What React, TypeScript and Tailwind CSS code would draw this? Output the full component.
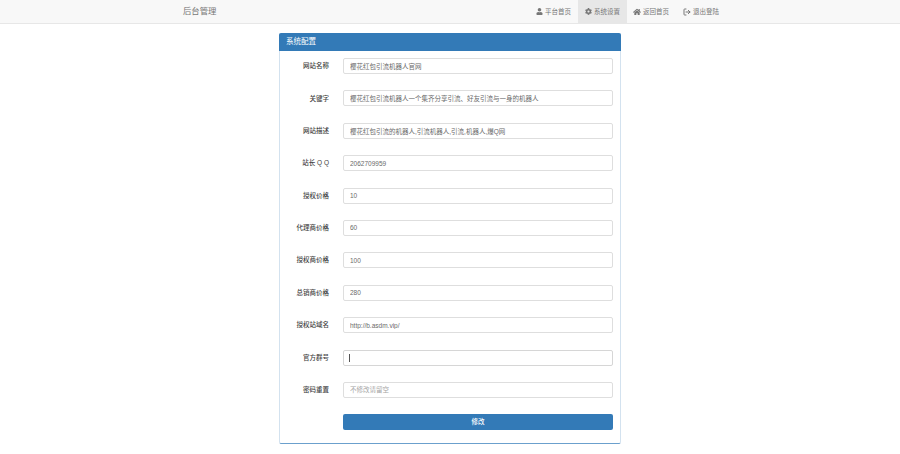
import React from 'react';
import { FaUser, FaCog, FaHome } from 'react-icons/fa';
import { FiLogOut } from 'react-icons/fi';

const fields = [
  { label: '网站名称', value: '樱花红包引流机器人官网' },
  { label: '关键字', value: '樱花红包引流机器人一个集齐分享引流、好友引流与一身的机器人' },
  { label: '网站描述', value: '樱花红包引流的机器人,引流机器人,引流,机器人,爆Q网' },
  { label: '站长 Q Q', value: '2062709959' },
  { label: '授权价格', value: '10' },
  { label: '代理商价格', value: '60' },
  { label: '授权商价格', value: '100' },
  { label: '总销商价格', value: '280' },
  { label: '授权站域名', value: 'http://b.asdm.vip/' },
  { label: '官方群号', value: '', caret: true },
  { label: '密码重置', value: '', placeholder: '不修改请留空' },
];

const navItems = [
  { label: '平台首页', icon: <FaUser className="w-[7px] h-[7px]" />, width: 'w-[51px] pl-[2px]' },
  { label: '系统设置', icon: <FaCog className="w-[7px] h-[7px]" />, width: 'w-[49px]', active: true },
  { label: '返回首页', icon: <FaHome className="w-[8px] h-[8px]" />, width: 'w-[48px]' },
  { label: '退出登陆', icon: <FiLogOut className="w-[8px] h-[8px] stroke-[3]" />, width: 'w-[52px]' },
];

export default function App() {
  return (
    <div className="min-h-[454px] bg-white text-[6.5px] text-[#333] font-['Liberation_Sans','Noto_Sans_CJK_SC',sans-serif]">
      {/* Navbar */}
      <nav className="h-[24px] bg-[#f8f8f8] border-b border-[#e7e7e7] pl-[183px] pr-[173px] flex items-stretch justify-between">
        <div className="flex items-center text-[8.4px] text-[#777]">后台管理</div>
        <ul className="flex">
          {navItems.map((item) => (
            <li
              key={item.label}
              className={`flex items-center justify-center gap-[2px] text-[#777] ${item.width} ${item.active ? 'bg-[#e7e7e7] text-[#555]' : ''}`}
            >
              {item.icon}
              <span>{item.label}</span>
            </li>
          ))}
        </ul>
      </nav>

      {/* Panel */}
      <div className="w-[342px] h-[411px] mt-[9px] ml-[279px] border border-[#6ba0cd] border-t-0 border-x-[#d3e2ef] rounded-[2px] flex flex-col">
        <div className="h-[18px] shrink-0 bg-[#337ab7] text-white text-[7.5px] flex items-center px-[7px] rounded-t-[2px] -mx-px">
          系统配置
        </div>
        <form className="pt-[7px] flex flex-col gap-[16.4px]">
          {fields.map((f) => (
            <div key={f.label} className="flex items-center h-[16px]">
              <label className="w-[49px] text-right font-medium shrink-0 text-[#444]">{f.label}</label>
              <div className="relative ml-[14px] w-[270px]">
                <input
                  readOnly
                  defaultValue={f.value}
                  placeholder={f.placeholder}
                  className={`w-full h-[16px] px-[6px] bg-white border rounded-[2px] text-[6.5px] text-[#6a6a6a] outline-none placeholder:text-[#a5a5a5] ${f.caret ? 'border-[#d6d6d6]' : 'border-[#dedede]'}`}
                />
                {f.caret && <span className="absolute left-[6px] top-[4px] w-px h-[8px] bg-[#555]" />}
              </div>
            </div>
          ))}
          <div className="pl-[63px]">
            <button type="button" className="w-[270px] h-[16px] bg-[#337ab7] rounded-[2px] text-white text-[6.5px] font-medium">
              修改
            </button>
          </div>
        </form>
      </div>
    </div>
  );
}
